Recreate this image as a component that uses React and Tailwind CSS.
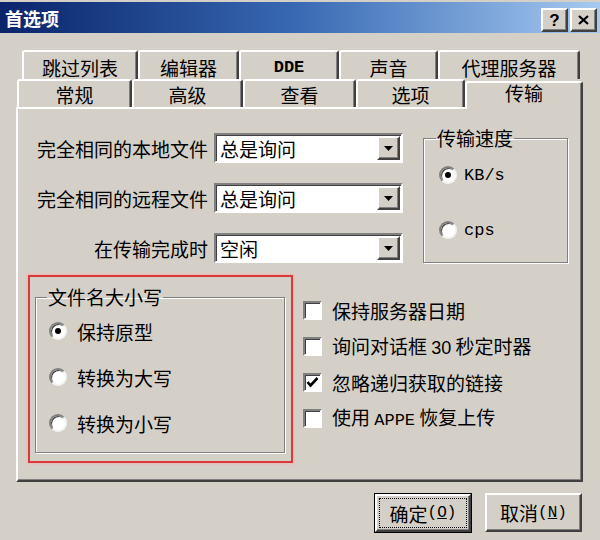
import React from 'react';

const raised =
  'border-2 border-t-white border-l-white border-r-[#404040] border-b-[#404040] shadow-[inset_-1px_-1px_0_#808080]';
const sunken =
  'border-2 border-t-[#808080] border-l-[#808080] border-r-white border-b-white shadow-[inset_1px_1px_0_#404040]';
const etched = 'border border-[#808080] shadow-[1px_1px_0_#fff,inset_1px_1px_0_#fff]';
const mono = "font-['Liberation_Mono',monospace]";

function TitleButton({ children }) {
  return (
    <div className={`w-[27px] h-[24px] bg-[#d4d0c8] flex items-center justify-center ${raised}`}>
      {children}
    </div>
  );
}

function Tab({ width, label, selected, back }) {
  const base = `h-full flex items-center justify-center bg-[#d4d0c8] rounded-t-[3px] border-t-2 border-l-2 border-r-2 border-t-white border-l-white border-r-[#404040] shadow-[inset_-1px_0_0_#808080] text-[19px] leading-none`;
  if (selected) {
    return (
      <div
        className={`${base} relative z-10 h-[32px] -mb-[2px] pb-[7px]`}
        style={{ width }}
      >
        {label}
      </div>
    );
  }
  return (
    <div className={`${base} ${back ? 'pt-[3px]' : ''}`} style={{ width }}>
      {label}
    </div>
  );
}

function Combo({ value }) {
  return (
    <div className={`ml-[6px] w-[189px] h-[30px] bg-white flex items-center ${sunken}`}>
      <span className="pl-[4px] text-[19px] leading-none">{value}</span>
      <div className={`ml-auto mr-[1px] w-[23px] h-[24px] bg-[#d4d0c8] flex items-center justify-center ${raised}`}>
        <svg width="9" height="5" viewBox="0 0 9 5">
          <polygon points="0,0 9,0 4.5,5" fill="#000" />
        </svg>
      </div>
    </div>
  );
}

function Radio({ checked }) {
  return (
    <div className="w-[18px] h-[18px] rounded-full bg-white border-2 border-t-[#808080] border-l-[#808080] border-r-[#f4f4f4] border-b-[#f4f4f4] shadow-[inset_1px_1px_0_#404040] flex items-center justify-center shrink-0">
      {checked && <div className="w-[6px] h-[6px] rounded-full bg-black" />}
    </div>
  );
}

function Checkbox({ checked }) {
  return (
    <div className={`w-[19px] h-[19px] bg-white shrink-0 flex items-center justify-center ${sunken}`}>
      {checked && (
        <svg width="13" height="12" viewBox="0 0 13 12">
          <path d="M1.5 6 L4.5 9.5 L11.5 2" stroke="#000" strokeWidth="2.6" fill="none" />
        </svg>
      )}
    </div>
  );
}

export default function App() {
  const backTabs = [
    ['跳过列表', 116],
    ['编辑器', 101],
    [<span className={`${mono} font-bold text-[17px]`}>DDE</span>, 100],
    ['声音', 99],
    ['代理服务器', 142],
  ];
  const frontTabs = [
    ['常规', 115],
    ['高级', 111],
    ['查看', 113],
    ['选项', 109],
  ];

  return (
    <div className="w-[600px] h-[540px] bg-[#d4d0c8] text-black overflow-hidden font-['Noto_Sans_CJK_SC','Noto_Sans',sans-serif]">
      {/* title bar */}
      <div className="pt-[2px]">
        <div className="h-[31px] flex items-center justify-between pl-[5px] pr-[3px] bg-linear-to-r from-[#0a246a] via-[#3a6ab4] to-[#a6caf0]">
          <span className="text-white font-bold text-[18px] leading-none">首选项</span>
          <div className="flex gap-[2px] mt-[5px]">
            <TitleButton>
              <span className="font-['Liberation_Sans',sans-serif] font-bold text-[17px] leading-none">?</span>
            </TitleButton>
            <TitleButton>
              <svg width="11" height="10" viewBox="0 0 11 10">
                <path d="M1 1 L10 9 M10 1 L1 9" stroke="#000" strokeWidth="2.2" />
              </svg>
            </TitleButton>
          </div>
        </div>
      </div>

      {/* tabs */}
      <div className="mt-[17px] flex pl-[22px] h-[29px]">
        {backTabs.map(([label, w], i) => (
          <Tab key={i} label={label} width={w} back />
        ))}
      </div>
      <div className="flex items-end pl-[17px] h-[28px]">
        {frontTabs.map(([label, w]) => (
          <Tab key={label} label={label} width={w} />
        ))}
        <Tab label="传输" width={118} selected />
      </div>

      {/* panel */}
      <div className={`ml-[16px] w-[567px] h-[375px] flex flex-col ${raised}`}>
        <div className="flex pt-[19px]">
          <div className="mt-[5px] flex flex-col gap-[20px]">
            <div className="flex items-center h-[30px]">
              <span className="w-[190px] text-right text-[19px] leading-none">完全相同的本地文件</span>
              <Combo value="总是询问" />
            </div>
            <div className="flex items-center h-[30px]">
              <span className="w-[190px] text-right text-[19px] leading-none">完全相同的远程文件</span>
              <Combo value="总是询问" />
            </div>
            <div className="flex items-center h-[30px]">
              <span className="w-[190px] text-right text-[19px] leading-none">在传输完成时</span>
              <Combo value="空闲" />
            </div>
          </div>

          <fieldset className={`ml-[20px] w-[145px] h-[135px] pl-[12px] ${etched}`}>
            <legend className="text-[19px] leading-[20px] px-[1px]">传输速度</legend>
            <div className="mt-[17px] ml-[3px] flex items-center gap-[7px] h-[20px]">
              <Radio checked />
              <span className={`${mono} text-[17px] leading-none`}>KB/s</span>
            </div>
            <div className="mt-[35px] ml-[3px] flex items-center gap-[7px] h-[20px]">
              <Radio />
              <span className={`${mono} text-[17px] leading-none`}>cps</span>
            </div>
          </fieldset>
        </div>

        <div className="flex mt-[12px]">
          <div className="ml-[10px] w-[265px] h-[188px] flex border-2 border-[#d8393b] shadow-[0_0_2px_1px_#f4b4b4] pt-[10px] pl-[5px] pr-[6px] pb-[8px]">
            <fieldset className={`flex-1 pl-[13px] ${etched}`}>
              <legend className="text-[19px] leading-[20px] px-[1px] -ml-[2px]">文件名大小写</legend>
              <div className="mt-[14px] flex items-center gap-[10px] h-[20px]">
                <Radio checked />
                <span className="text-[19px] leading-none">保持原型</span>
              </div>
              <div className="mt-[26px] flex items-center gap-[10px] h-[20px]">
                <Radio />
                <span className="text-[19px] leading-none">转换为大写</span>
              </div>
              <div className="mt-[26px] flex items-center gap-[10px] h-[20px]">
                <Radio />
                <span className="text-[19px] leading-none">转换为小写</span>
              </div>
            </fieldset>
          </div>

          <div className="ml-[10px] pt-[17px] flex flex-col">
            <div className="h-[36px] flex items-center gap-[10px]">
              <Checkbox />
              <span className="text-[19px] leading-none">保持服务器日期</span>
            </div>
            <div className="h-[36px] flex items-center gap-[10px]">
              <Checkbox />
              <span className="text-[19px] leading-none">
                询问对话框 <span className="font-['Liberation_Sans',sans-serif] text-[18px]">30</span> 秒定时器
              </span>
            </div>
            <div className="h-[36px] flex items-center gap-[10px]">
              <Checkbox checked />
              <span className="text-[19px] leading-none">忽略递归获取的链接</span>
            </div>
            <div className="h-[36px] flex items-center gap-[10px]">
              <Checkbox />
              <span className="text-[19px] leading-none">
                使用 <span className={`${mono} text-[17px]`}>APPE</span> 恢复上传
              </span>
            </div>
          </div>
        </div>
      </div>

      {/* buttons */}
      <div className="flex justify-end items-start gap-[13px] pr-[18px] mt-[11px]">
        <div className="w-[98px] h-[40px] border border-black flex">
          <div className={`flex-1 flex p-[2px] bg-[#d4d0c8] ${raised}`}>
            <div className="flex-1 border border-dotted border-black flex items-center justify-center text-[19px] leading-none">
              确定<span className={`${mono} text-[16px]`}>(<span className="underline">O</span>)</span>
            </div>
          </div>
        </div>
        <div className={`w-[97px] h-[39px] flex items-center justify-center bg-[#d4d0c8] text-[19px] leading-none ${raised}`}>
          取消<span className={`${mono} text-[16px]`}>(<span className="underline">N</span>)</span>
        </div>
      </div>
    </div>
  );
}
